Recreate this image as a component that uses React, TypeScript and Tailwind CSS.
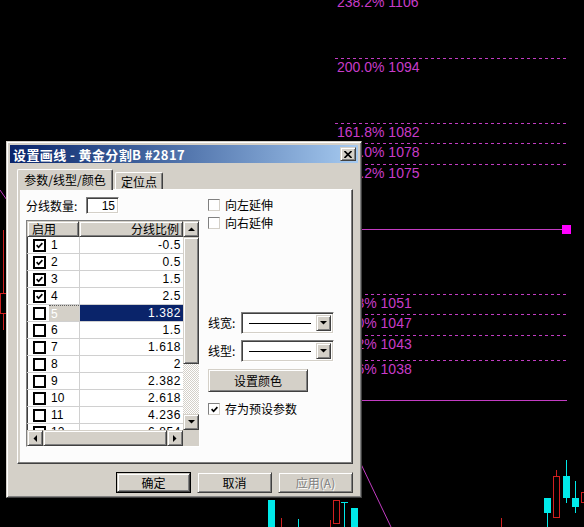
import React from 'react'

// classic 3D borders
const raised =
  'border border-t-[#d4d0c8] border-l-[#d4d0c8] border-r-[#404040] border-b-[#404040] shadow-[inset_1px_1px_#ffffff,inset_-1px_-1px_#808080]'
const sunken =
  'border border-t-[#808080] border-l-[#808080] border-r-white border-b-white shadow-[inset_1px_1px_#404040,inset_-1px_-1px_#d4d0c8]'

const rows = [
  { n: '1', v: '-0.5', on: true },
  { n: '2', v: '0.5', on: true },
  { n: '3', v: '1.5', on: true },
  { n: '4', v: '2.5', on: true },
  { n: '5', v: '1.382', on: false, sel: true },
  { n: '6', v: '1.5', on: false },
  { n: '7', v: '1.618', on: false },
  { n: '8', v: '2', on: false },
  { n: '9', v: '2.382', on: false },
  { n: '10', v: '2.618', on: false },
  { n: '11', v: '4.236', on: false },
  { n: '12', v: '6.854', on: false },
]

const dashed = [58, 123, 143, 164, 294, 314, 335, 360]
const labels = [
  { y: -7, t: '238.2% 1106' },
  { y: 58, t: '200.0% 1094' },
  { y: 123, t: '161.8% 1082' },
  { y: 143, t: '150.0% 1078' },
  { y: 164, t: '138.2% 1075' },
  { y: 294, t: '61.8% 1051' },
  { y: 314, t: '50.0% 1047' },
  { y: 335, t: '38.2% 1043' },
  { y: 360, t: '23.6% 1038' },
]

function Tick() {
  return (
    <svg width="7" height="7" viewBox="0 0 7 7">
      <path d="M0.6 3.2 L2.6 5.3 L6.4 1.2" fill="none" stroke="#000" strokeWidth="1.7" />
    </svg>
  )
}

function Arrow({ dir }: { dir: 'up' | 'down' | 'left' | 'right' }) {
  const pts = {
    up: '0,4 3.5,0.5 7,4',
    down: '0,0 3.5,3.5 7,0',
    left: '4,0 0.5,3.5 4,7',
    right: '0,0 3.5,3.5 0,7',
  }[dir]
  const vert = dir === 'up' || dir === 'down'
  return (
    <svg width={vert ? 7 : 4} height={vert ? 4 : 7} viewBox={vert ? '0 0 7 4' : '0 0 4 7'}>
      <polygon points={pts} fill="#000" />
    </svg>
  )
}

function Chart() {
  const line = '#c23cc2'
  return (
    <svg className="absolute inset-0" width="584" height="527">
      {dashed.map((y) => (
        <line key={y} x1="335" x2="567" y1={y + 0.5} y2={y + 0.5} stroke={line} strokeDasharray="3 3" />
      ))}
      <line x1="335" x2="567" y1="229.5" y2="229.5" stroke={line} />
      <line x1="335" x2="567" y1="400.5" y2="400.5" stroke={line} />
      <rect x="562" y="225" width="9" height="9" fill="#ff00ff" />
      {labels.map((l) => (
        <text key={l.t} x="337" y={l.y + 14} fill="#c83cc8" fontSize="14" fontFamily="Liberation Sans, Arial, sans-serif">
          {l.t}
        </text>
      ))}
      {/* trend line */}
      <line x1="340" y1="420" x2="391" y2="527" stroke={line} />
      <line x1="0" y1="190" x2="9" y2="203" stroke={line} />

      {/* left candle */}
      <line x1="3.5" y1="230" x2="3.5" y2="330" stroke="#d02020" />
      <rect x="0.5" y="293.5" width="6" height="20" fill="#000" stroke="#d02020" />

      {/* bottom candles */}
      <rect x="268" y="500" width="7" height="27" fill="#00eaea" />
      <line x1="281.5" y1="518" x2="281.5" y2="527" stroke="#d02020" />
      <line x1="298.5" y1="519" x2="298.5" y2="527" stroke="#00eaea" />
      <line x1="330.5" y1="520" x2="330.5" y2="527" stroke="#d02020" />
      <rect x="333.5" y="500.5" width="6" height="23" fill="none" stroke="#d02020" />
      <line x1="341" y1="502.5" x2="348" y2="502.5" stroke="#00eaea" />
      <line x1="344.5" y1="502" x2="344.5" y2="527" stroke="#00eaea" />
      <rect x="351" y="508" width="7" height="19" fill="#00eaea" />
      <line x1="501.5" y1="518" x2="501.5" y2="527" stroke="#d02020" />

      <line x1="547.5" y1="498" x2="547.5" y2="527" stroke="#00eaea" />
      <rect x="544" y="498" width="7" height="15" fill="#00eaea" />
      <line x1="556.5" y1="470" x2="556.5" y2="476" stroke="#d02020" />
      <rect x="553.5" y="476.5" width="6" height="41" fill="none" stroke="#d02020" />
      <line x1="566.5" y1="460" x2="566.5" y2="503" stroke="#00eaea" />
      <rect x="563" y="476" width="7" height="22" fill="#00eaea" />
      <line x1="575.5" y1="481" x2="575.5" y2="513" stroke="#00eaea" />
      <rect x="572" y="498" width="7" height="9" fill="#00eaea" />
      <rect x="581.5" y="492.5" width="6" height="10" fill="none" stroke="#d02020" />
    </svg>
  )
}

function ListBox() {
  return (
    <div className={`mt-[6px] flex h-[227px] w-[174px] flex-col bg-white ${sunken}`}>
      <div className="flex min-h-0 flex-1">
        <div className="flex min-w-0 flex-1 flex-col">
          {/* header */}
          <div className="flex h-[16px] shrink-0 text-[12px] leading-none text-black">
            <div className={`flex w-[52px] items-center bg-[#d4d0c8] pl-[4px] ${raised}`}>启用</div>
            <div className={`flex flex-1 items-center justify-end bg-[#d4d0c8] pr-[3px] ${raised}`}>分线比例</div>
          </div>
          <div className="min-h-0 flex-1 overflow-hidden">
            {rows.map((r) => (
              <div key={r.n} className="flex h-[17px] border-b border-[#d0d0d0]">
                <div className="flex w-[52px] items-center pl-[6px]">
                  <div className="flex h-[13px] w-[13px] shrink-0 items-center justify-center border-2 border-black bg-white">
                    {r.on && <Tick />}
                  </div>
                  <div
                    className={`ml-[3px] flex h-full flex-1 items-center pl-[2px] text-[12px] [font-family:'Liberation_Sans',sans-serif] ${
                      r.sel ? 'border-t border-dotted border-[#606060] bg-[#d4d0c8] text-white' : 'text-black'
                    }`}
                  >
                    {r.n}
                  </div>
                </div>
                <div
                  className={`flex flex-1 items-center justify-end border-l border-[#d0d0d0] pr-[2px] text-[12px] tracking-[0.6px] [font-family:'Liberation_Sans',sans-serif] ${
                    r.sel ? 'bg-[#0a246a] text-white' : 'text-black'
                  }`}
                >
                  {r.v}
                </div>
              </div>
            ))}
          </div>
        </div>
        {/* vertical scrollbar */}
        <div className="flex w-[16px] flex-col">
          <div className={`flex h-[16px] items-center justify-center bg-[#d4d0c8] ${raised}`}>
            <Arrow dir="up" />
          </div>
          <div className={`h-[127px] bg-[#d4d0c8] ${raised}`} />
          <div className="flex-1 bg-[image:repeating-conic-gradient(#d4d0c8_0_25%,#ffffff_0_50%)] bg-[length:2px_2px]" />
          <div className={`flex h-[16px] items-center justify-center bg-[#d4d0c8] ${raised}`}>
            <Arrow dir="down" />
          </div>
        </div>
      </div>
      {/* horizontal scrollbar */}
      <div className="flex h-[16px] shrink-0">
        <div className={`flex w-[16px] items-center justify-center bg-[#d4d0c8] ${raised}`}>
          <Arrow dir="left" />
        </div>
        <div className={`flex-1 bg-[#d4d0c8] ${raised}`} />
        <div className={`flex w-[16px] items-center justify-center bg-[#d4d0c8] ${raised}`}>
          <Arrow dir="right" />
        </div>
        <div className="w-[16px] bg-[#d4d0c8]" />
      </div>
    </div>
  )
}

function CheckRow({ label, on }: { label: string; on?: boolean }) {
  return (
    <div className="flex h-[16px] items-center gap-[5px] text-[12px] leading-none text-black">
      <div className="flex h-[12px] w-[12px] items-center justify-center border border-t-[#808080] border-l-[#808080] border-r-[#d4d0c8] border-b-[#d4d0c8] bg-white">
        {on && <Tick />}
      </div>
      <span>{label}</span>
    </div>
  )
}

function Combo({ label }: { label: string }) {
  return (
    <div className="flex h-[22px] items-center text-[12px] leading-none text-black">
      <span className="w-[33px]">{label}</span>
      <div className={`flex h-full w-[93px] items-center bg-white p-[2px] ${sunken}`}>
        <div className="flex flex-1 items-center px-[5px]">
          <div className="h-px w-full bg-black" />
        </div>
        <div className={`flex h-full w-[15px] items-center justify-center bg-[#d4d0c8] ${raised}`}>
          <Arrow dir="down" />
        </div>
      </div>
    </div>
  )
}

function Dialog() {
  return (
    <div className={`absolute left-[6px] top-[141px] flex h-[357px] w-[356px] flex-col bg-[#d4d0c8] p-[3px] ${raised}`}>
      {/* title bar */}
      <div className="flex h-[18px] shrink-0 items-center justify-between bg-linear-to-r from-[#0a246a] to-[#a6caf0] pl-[3px] pr-[2px]">
        <span className="text-[13px] font-bold leading-none tracking-[0.4px] text-white">设置画线 - 黄金分割B #2817</span>
        <div className={`flex h-[14px] w-[16px] items-center justify-center bg-[#d4d0c8] ${raised}`}>
          <svg width="8" height="7" viewBox="0 0 8 7">
            <path d="M0.5 0 L7.5 7 M7.5 0 L0.5 7" stroke="#000" strokeWidth="1.6" />
          </svg>
        </div>
      </div>

      <div className="mt-[6px] flex flex-col pl-[7px] pr-[5px]">
        {/* tabs */}
        <div className="relative z-10 flex h-[20px] items-end text-[12px] leading-none text-black">
          <div className="-mb-px flex h-[21px] w-[96px] items-center justify-center rounded-t-[2px] border-t border-l border-r border-white border-r-[#404040] bg-[#d4d0c8] shadow-[inset_-1px_0_#808080]">
            参数/线型/颜色
          </div>
          <div className="ml-[2px] flex h-[17px] w-[48px] items-center justify-center rounded-t-[2px] border-t border-l border-r border-white border-r-[#404040] bg-[#d4d0c8] pt-[2px] shadow-[inset_-1px_0_#808080]">
            定位点
          </div>
        </div>

        {/* panel */}
        <div className="flex h-[275px] border border-t-white border-l-white border-r-[#404040] border-b-[#404040] bg-[#d4d0c8] pb-[1px] pl-[2px] pr-[1px] shadow-[inset_-1px_-1px_#808080]">
          <div className="flex flex-1 bg-[#fcfcfc]">
            <div className="ml-[6px] flex w-[174px] flex-col pt-[7px]">
              <div className="flex h-[17px] items-center text-[12px] leading-none text-black">
                <span className="w-[60px]">分线数量:</span>
                <div className={`flex h-[17px] w-[33px] items-center justify-end bg-white pr-[3px] text-[12px] [font-family:'Liberation_Sans',sans-serif] ${sunken}`}>
                  15
                </div>
              </div>
              <ListBox />
            </div>

            <div className="ml-[8px] flex flex-col pt-[7px]">
              <CheckRow label="向左延伸" />
              <div className="mt-[2px]">
                <CheckRow label="向右延伸" />
              </div>
              <div className="mt-[81px] flex flex-col gap-[6px]">
                <Combo label="线宽:" />
                <Combo label="线型:" />
              </div>
              <div className={`mt-[7px] flex h-[23px] w-[100px] items-center justify-center bg-[#d4d0c8] text-[12px] leading-none text-black ${raised}`}>
                设置颜色
              </div>
              <div className="mt-[9px]">
                <CheckRow label="存为预设参数" on />
              </div>
            </div>
          </div>
        </div>
      </div>

      {/* buttons */}
      <div className="mt-[8px] flex justify-end gap-[6px] pr-[5px] text-[12px] leading-none">
        <div className="h-[21px] w-[75px] border border-black">
          <div className={`flex h-full w-full items-center justify-center bg-[#d4d0c8] text-black ${raised}`}>确定</div>
        </div>
        <div className={`flex h-[21px] w-[75px] items-center justify-center bg-[#d4d0c8] text-black ${raised}`}>取消</div>
        <div className={`flex h-[21px] w-[75px] items-center justify-center bg-[#d4d0c8] text-[#808080] [text-shadow:1px_1px_0_#ffffff] ${raised}`}>
          应用(A)
        </div>
      </div>
    </div>
  )
}

export default function App() {
  return (
    <div className="relative h-[527px] w-[584px] overflow-hidden bg-black [font-family:'Noto_Sans_CJK_SC',sans-serif]">
      <Chart />
      <Dialog />
    </div>
  )
}
